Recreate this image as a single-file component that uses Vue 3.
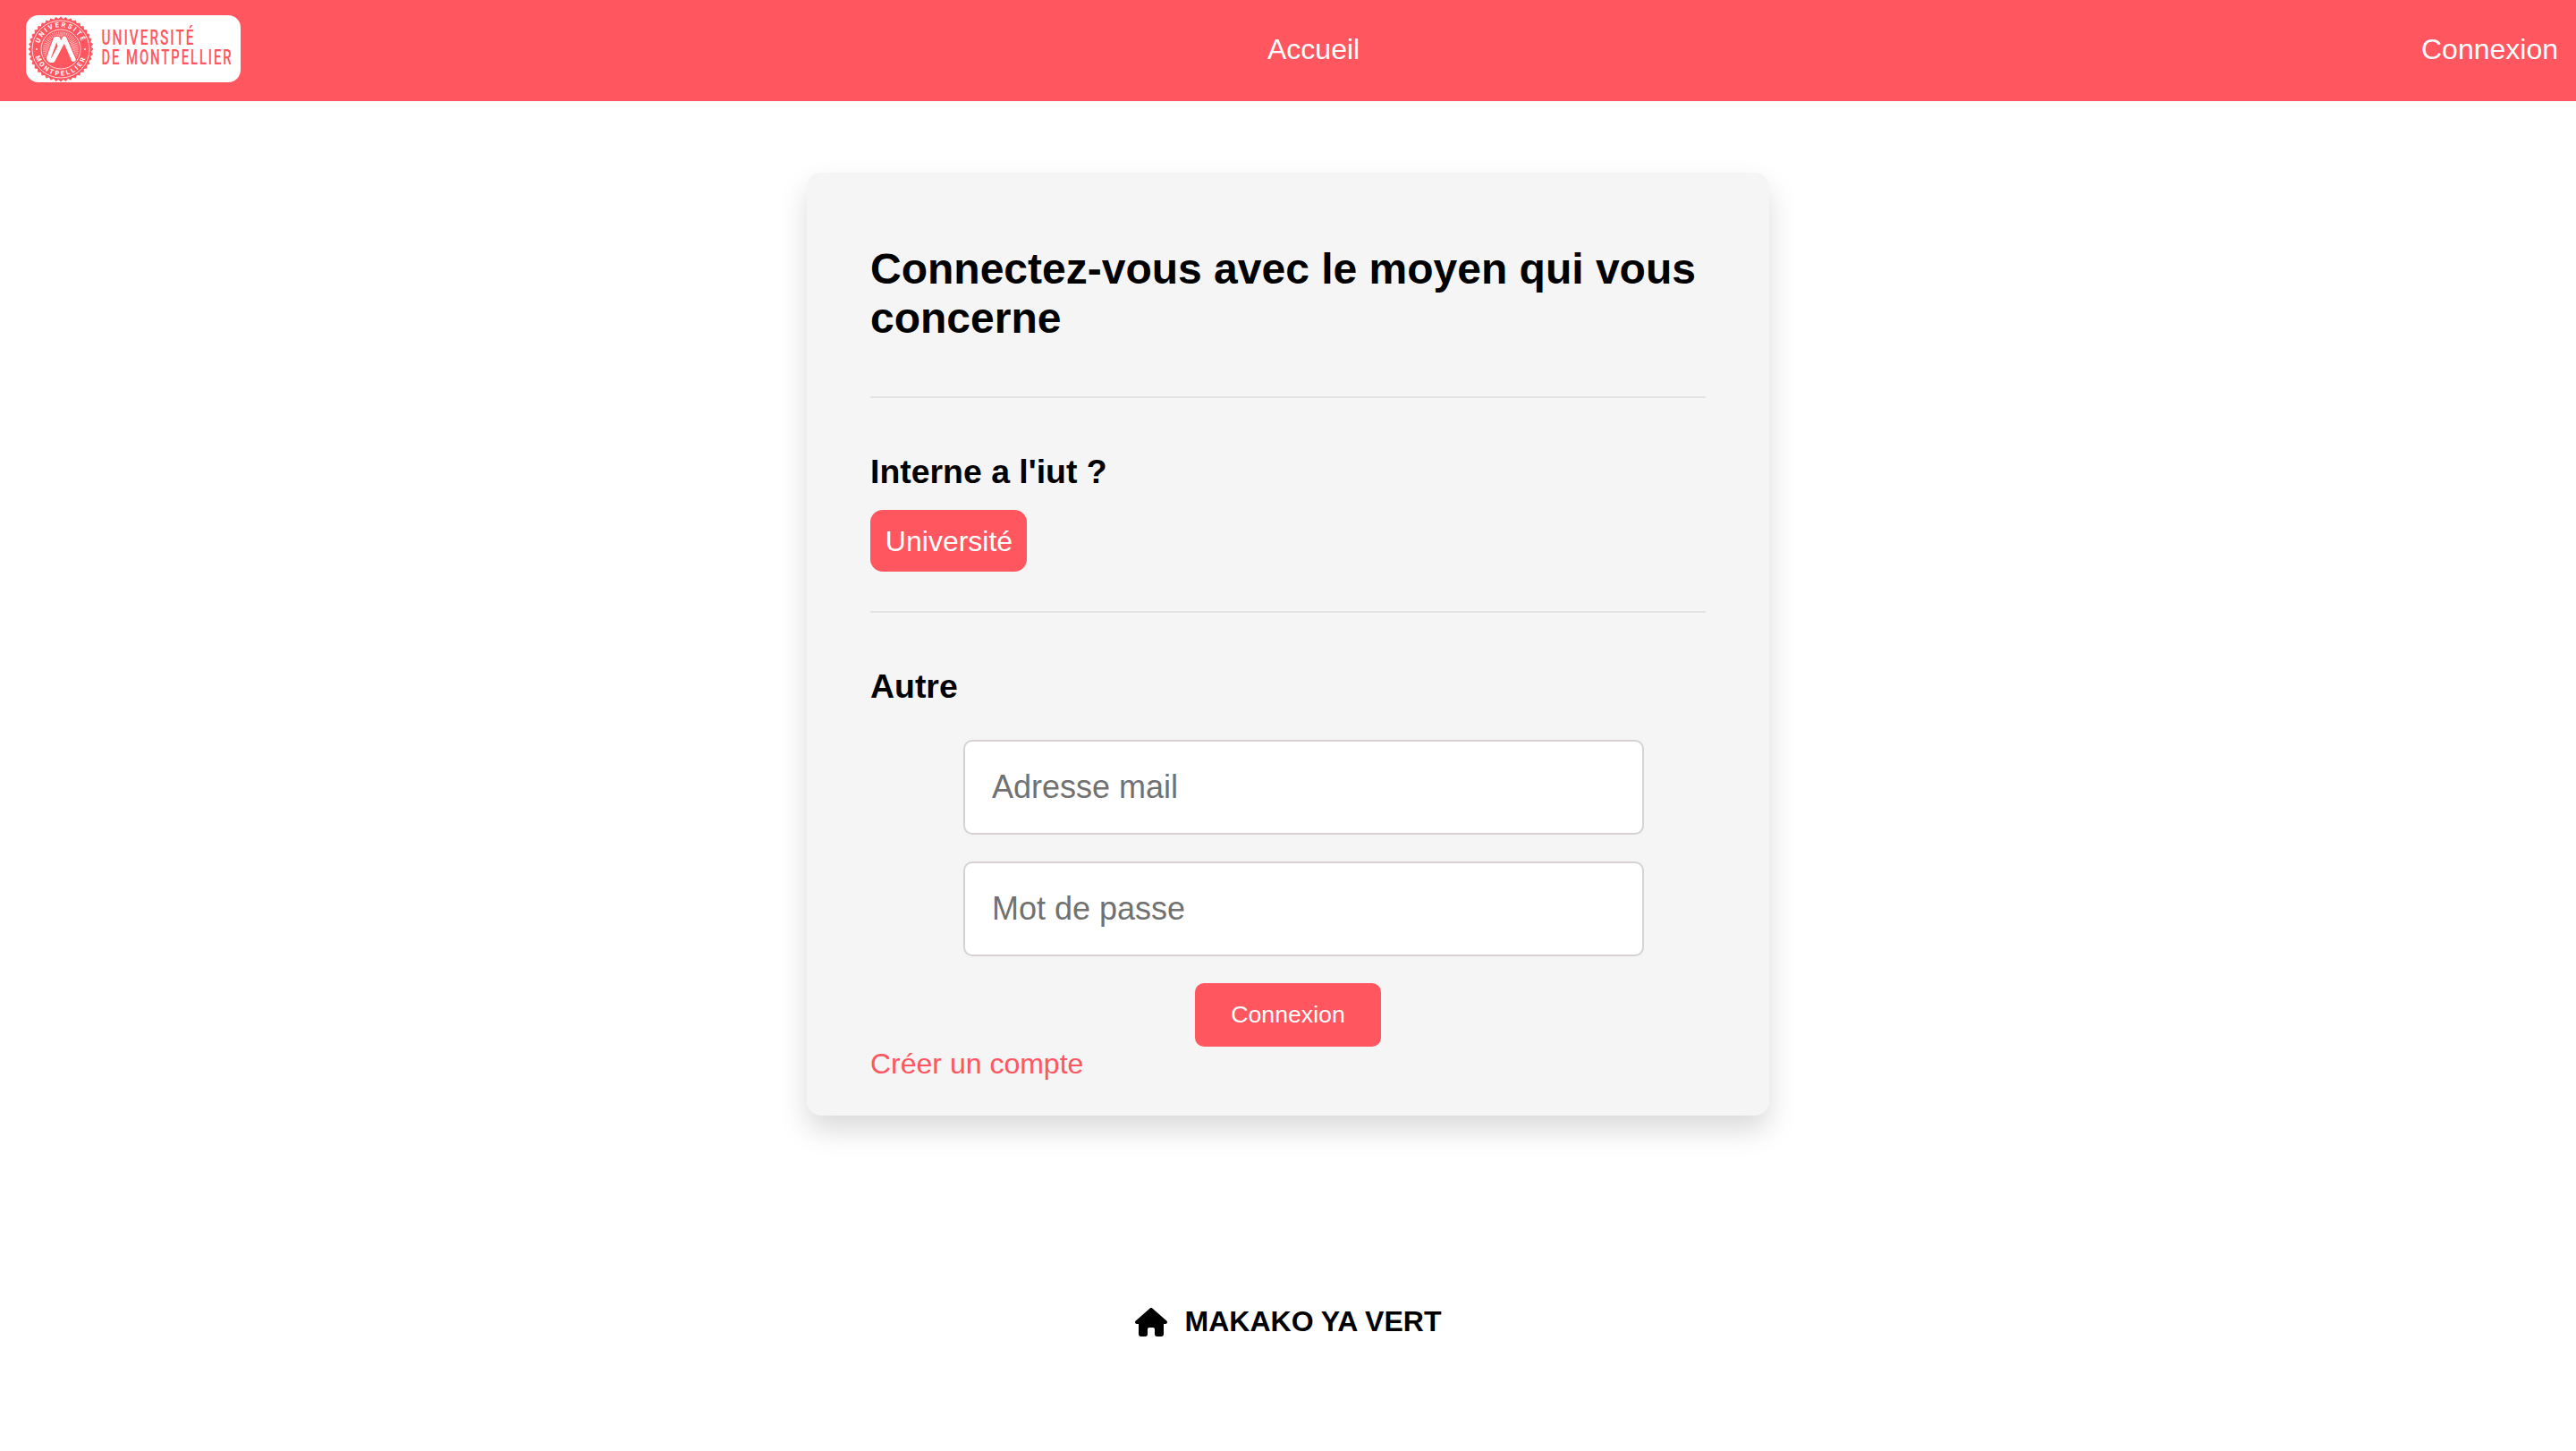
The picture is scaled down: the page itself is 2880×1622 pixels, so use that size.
<script setup>
import { ref } from 'vue'

const email = ref('')
const password = ref('')

// Scalloped edge of the seal
const teeth = 40
const seal = Array.from({ length: teeth * 2 }, (_, i) => {
  const a = (Math.PI * i) / teeth
  const r = i % 2 ? 34 : 36.5
  return `${(39 + r * Math.cos(a)).toFixed(2)},${(38 + r * Math.sin(a)).toFixed(2)}`
}).join(' ')

// Sun rays behind the monogram
const rays = Array.from({ length: 35 }, (_, i) => {
  const a = Math.PI + ((i - 4) * Math.PI) / 26
  return {
    x1: 39 + 11 * Math.cos(a),
    y1: 38 + 11 * Math.sin(a),
    x2: 39 + 20 * Math.cos(a),
    y2: 38 + 20 * Math.sin(a),
  }
})
</script>

<template>
  <div class="page">
    <header class="bar">
      <a class="logo" aria-label="Université de Montpellier">
        <svg width="240" height="75" viewBox="0 0 240 75">
          <polygon :points="seal" fill="#ff565f" />
          <circle class="ring" cx="39" cy="38" r="32" />
          <circle class="ring" cx="39" cy="38" r="22" />
          <line v-for="(r, i) in rays" :key="i" class="ray" v-bind="r" />
          <defs>
            <path id="arc-top" d="M14.3 38a24.7 24.7 0 0 1 49.4 0" />
            <path id="arc-bottom" d="M9.5 38a29.5 29.5 0 0 0 59 0" />
          </defs>
          <text class="seal-text top"><textPath href="#arc-top" startOffset="6.5">UNIVERSITÉ</textPath></text>
          <text class="seal-text bottom"><textPath href="#arc-bottom" startOffset="8.5">MONTPELLIER</textPath></text>
          <circle cx="12" cy="38" r="0.9" fill="#fff" />
          <circle cx="66" cy="38" r="0.9" fill="#fff" />
          <path class="mono-back" d="M37.5 33L36 26.500L33 26.500L26 46Q24.500 51.500 30 50.500L43 26L53.200 49.500" />
          <path class="mono" d="M37.500 33L36 26.500L33 26.500L26 46Q24.500 51.500 30 50.500L43 26L53.200 49.500" />
          <text class="word" x="84.500" y="33" textLength="105" lengthAdjust="spacingAndGlyphs">UNIVERSITÉ</text>
          <text class="word" x="84.500" y="55" textLength="147" lengthAdjust="spacingAndGlyphs">DE MONTPELLIER</text>
        </svg>
      </a>
      <a class="home">Accueil</a>
      <a class="login">Connexion</a>
    </header>

    <main class="card">
      <h1>Connectez-vous avec le moyen qui vous concerne</h1>
      <hr />
      <h3>Interne a l'iut ?</h3>
      <a class="univ">Université</a>
      <hr class="second" />
      <h3>Autre</h3>
      <form @submit.prevent>
        <input v-model="email" type="email" placeholder="Adresse mail" />
        <input v-model="password" type="password" placeholder="Mot de passe" />
        <button type="submit">Connexion</button>
      </form>
      <a class="create">Créer un compte</a>
    </main>

    <footer>
      <svg width="36" height="32" viewBox="0 0 576 512">
        <path d="M575.8 255.5c0 18-15 32.100-32 32.100h-32l.7 160.200c0 2.700-.2 5.400-.5 8.100V472c0 22.100-17.900 40-40 40H456c-1.100 0-2.200 0-3.300-.1c-1.400 .1-2.800 .1-4.200 .1H416 392c-22.100 0-40-17.900-40-40V448 384c0-17.700-14.300-32-32-32H256c-17.700 0-32 14.300-32 32v64 24c0 22.100-17.900 40-40 40H160 128.100c-1.500 0-3-.1-4.500-.2c-1.200 .1-2.400 .2-3.600 .2H104c-22.100 0-40-17.900-40-40V360c0-.9 0-1.900 .1-2.800V287.600H32c-18 0-32-14-32-32.100c0-9 3-17 10-24L266.400 8c7-7 15-8 22-8s15 2 21 7L564.800 231.500c8 7 12 15 11 24z" />
      </svg>
      <strong>MAKAKO YA VERT</strong>
    </footer>
  </div>
</template>

<style>
html,
body {
  margin: 0;
  background: #fff;
}
</style>

<style scoped>
.page {
  height: 1622px;
  overflow: hidden;
  display: flex;
  flex-direction: column;
  align-items: center;
  font-family: "Liberation Sans", Arial, Helvetica, sans-serif;
  font-size: 32px;
  line-height: 37px;
  color: #000;
}

.bar {
  width: 100%;
  height: 113px;
  box-sizing: border-box;
  padding: 17px 20px 0 29px;
  display: flex;
  align-items: flex-start;
  background: #ff565f;
  color: #fff;
}

.logo {
  width: 240px;
  height: 75px;
  border-radius: 14px;
  background: #fff;
  overflow: hidden;
}

.logo svg {
  display: block;
}

.ring {
  fill: none;
  stroke: #fff;
  stroke-width: 0.8;
}

.ray {
  stroke: #fff;
  stroke-width: 0.6;
}

.seal-text {
  font-family: Roboto, sans-serif;
  font-size: 7.4px;
  font-weight: 700;
  fill: #fff;
}

.top {
  letter-spacing: 2.2px;
}

.bottom {
  letter-spacing: 2.4px;
}

.mono,
.mono-back {
  fill: none;
  stroke: #fff;
  stroke-width: 4.9;
  stroke-linejoin: round;
  stroke-linecap: round;
}

.mono-back {
  stroke: #ff565f;
  stroke-width: 7;
}

.word {
  font-family: Roboto, sans-serif;
  font-size: 23.5px;
  font-weight: 500;
  letter-spacing: 3px;
  fill: #ff565f;
}

.home,
.login {
  margin-top: 20px;
}

.home {
  margin-left: 1148px;
}

.login {
  margin-left: auto;
}

.card {
  width: 1076px;
  height: 1054px;
  box-sizing: border-box;
  margin-top: 80px;
  padding: 80px 71px 39px;
  border-radius: 16px;
  background: #f5f5f5;
  box-shadow: 0 16px 32px rgba(0, 0, 0, 0.15);
  display: flex;
  flex-direction: column;
  align-items: flex-start;
}

h1 {
  margin: 0;
  font-size: 48px;
  line-height: 55px;
}

hr {
  width: 100%;
  height: 2px;
  margin: 60px 0 61px;
  border: 0;
  background: #e3e3e3;
}

hr.second {
  margin-top: 44px;
}

h3 {
  margin: 0;
  font-size: 37.44px;
  line-height: 43px;
}

.univ {
  width: 175px;
  height: 69px;
  box-sizing: border-box;
  margin-top: 21px;
  padding: 17px 0 15px 1px;
  border-radius: 14px;
  background: #ff565f;
  color: #fff;
  text-align: center;
}

form {
  width: 100%;
  margin-top: 38px;
  display: flex;
  flex-direction: column;
  align-items: center;
  gap: 30px;
}

input {
  width: 761px;
  height: 106px;
  box-sizing: border-box;
  margin-left: 35px;
  padding: 30px;
  border: 2px solid #d6d1d2;
  border-radius: 10px;
  background: #fff;
  font-family: inherit;
  font-size: 36px;
}

input::placeholder {
  color: #717171;
}

button {
  width: 208px;
  height: 71px;
  padding: 0;
  border: 0;
  border-radius: 10px;
  background: #ff565f;
  color: #fff;
  font-family: inherit;
  font-size: 26.667px;
}

.create {
  margin-top: 1px;
  color: #ff565f;
}

footer {
  margin-top: 212px;
  display: flex;
  align-items: center;
  gap: 20px;
}

footer svg {
  display: block;
}
</style>
